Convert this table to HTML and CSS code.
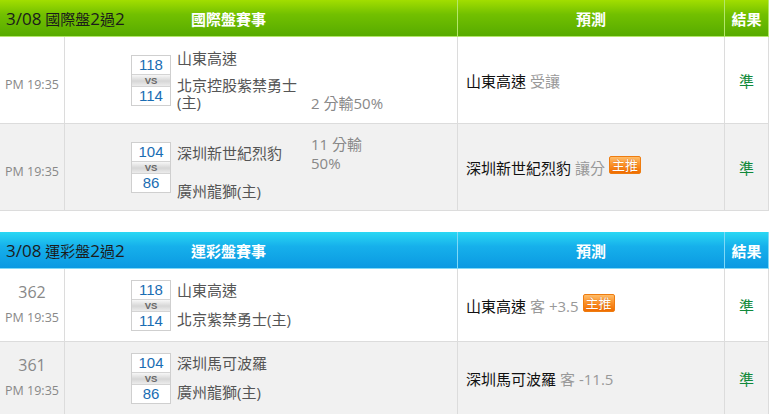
FILE: index.html
```html
<!DOCTYPE html>
<html lang="zh-Hant">
<head>
<meta charset="utf-8">
<title>過關預測</title>
<link rel="stylesheet" href="styles.css">
</head>
<body>
<section class="board green">
  <div class="head">
    <div class="h-title"><span class="h-date"><span class="d-num">3/08</span> 國際盤<span class="d-num">2</span>過<span class="d-num">2</span></span><span class="h-name">國際盤賽事</span><span></span></div>
    <div class="h-cell">預測</div>
    <div class="h-cell">結果</div>
  </div>
  <div class="row row-tall">
    <div class="c-time"><div class="times"><span class="time time-only">PM 19:35</span></div></div>
    <div class="c-match">
      <div class="match">
        <div class="score"><span class="pts">118</span><span class="vs">VS</span><span class="pts">114</span></div>
        <div class="lines lines-info">
          <span class="team t1">山東高速</span>
          <span class="team t2">北京控股紫禁勇士(主)</span>
          <span class="info info-low">2 分輸50%</span>
        </div>
      </div>
    </div>
    <div class="c-pred"><span class="p-team">山東高速</span><span class="p-odds">受讓</span></div>
    <div class="c-res">準</div>
  </div>
  <div class="row row-tall alt">
    <div class="c-time"><div class="times"><span class="time time-only">PM 19:35</span></div></div>
    <div class="c-match">
      <div class="match">
        <div class="score"><span class="pts">104</span><span class="vs">VS</span><span class="pts">86</span></div>
        <div class="lines lines-info">
          <span class="team t1">深圳新世紀烈豹</span>
          <span class="team t2">廣州龍獅(主)</span>
          <span class="info info-high">11 分輸50%</span>
        </div>
      </div>
    </div>
    <div class="c-pred"><span class="p-team">深圳新世紀烈豹</span><span class="p-odds">讓分</span><span class="badge">主推</span></div>
    <div class="c-res">準</div>
  </div>
</section>

<section class="board blue">
  <div class="head">
    <div class="h-title"><span class="h-date"><span class="d-num">3/08</span> 運彩盤<span class="d-num">2</span>過<span class="d-num">2</span></span><span class="h-name">運彩盤賽事</span><span></span></div>
    <div class="h-cell">預測</div>
    <div class="h-cell">結果</div>
  </div>
  <div class="row row-short">
    <div class="c-time"><div class="times"><span class="num">362</span><span class="time">PM 19:35</span></div></div>
    <div class="c-match">
      <div class="match">
        <div class="score"><span class="pts">118</span><span class="vs">VS</span><span class="pts">114</span></div>
        <div class="lines lines-plain">
          <span class="team t1">山東高速</span>
          <span class="team t2">北京紫禁勇士(主)</span>
        </div>
      </div>
    </div>
    <div class="c-pred"><span class="p-team">山東高速</span><span class="p-odds">客 +3.5</span><span class="badge">主推</span></div>
    <div class="c-res">準</div>
  </div>
  <div class="row row-short alt">
    <div class="c-time"><div class="times"><span class="num">361</span><span class="time">PM 19:35</span></div></div>
    <div class="c-match">
      <div class="match">
        <div class="score"><span class="pts">104</span><span class="vs">VS</span><span class="pts">86</span></div>
        <div class="lines lines-plain">
          <span class="team t1">深圳馬可波羅</span>
          <span class="team t2">廣州龍獅(主)</span>
        </div>
      </div>
    </div>
    <div class="c-pred"><span class="p-team">深圳馬可波羅</span><span class="p-odds">客 -11.5</span></div>
    <div class="c-res">準</div>
  </div>
</section>
</body>
</html>
```

FILE: styles.css
```css
* { box-sizing: border-box; margin: 0; padding: 0; }

body {
  margin: 0;
  width: 769px;
  background: #fff;
  color: #333;
  font-family: "Open Sans", "Noto Sans CJK TC", sans-serif;
}

.board + .board { margin-top: 21px; }

/* header */
.head {
  display: grid;
  grid-template-columns: 458px 267px 44px;
  height: 37px;
  border-bottom: 1px solid;
}
.green .head {
  background: linear-gradient(#a2de00 0%, #72c000 40%, #57ab00 100%);
  border-bottom-color: #b4e76a;
}
.blue .head {
  background: linear-gradient(#2ad8f4 0%, #16b0eb 40%, #0b99e2 100%);
  border-bottom-color: #7fd9f7;
}
.h-title {
  display: grid;
  grid-template-columns: 1fr auto 1fr;
  align-items: center;
  border-right: 1px solid;
}
.h-cell {
  display: flex;
  align-items: center;
  justify-content: center;
  border-right: 1px solid;
}
.green .h-title, .green .h-cell { border-right-color: #b4e76a; }
.blue .h-title, .blue .h-cell { border-right-color: #7fd9f7; }

.h-date {
  padding-left: 6px;
  font-size: 15px;
  color: #1b1b1b;
  white-space: nowrap;
}
.d-num { font-size: 17px; }
.h-name, .h-cell {
  font-size: 15px;
  font-weight: bold;
  color: #fff;
}

/* rows */
.row {
  display: grid;
  grid-template-columns: 65px 393px 267px 44px;
  border-bottom: 1px solid #dcdcdc;
  background: #fff;
}
.row.alt { background: #f1f1f1; }
.row-tall { height: 87px; }
.row-short { height: 73px; }
.row > div {
  display: flex;
  align-items: center;
  border-right: 1px solid #dcdcdc;
}

/* time column */
.c-time { justify-content: center; }
.times {
  display: flex;
  flex-direction: column;
  align-items: center;
  color: #888;
}
.time {
  font-size: 12.5px;
  line-height: 26px;
  white-space: nowrap;
}
.time-only { padding-top: 9px; line-height: 18px; }
.num {
  font-size: 16px;
  line-height: 26px;
  color: #888;
}

/* match column */
.match {
  display: flex;
  align-items: center;
  gap: 6px;
  padding-left: 66px;
}
.score {
  width: 40px;
  border: 1px solid #cfcfcf;
  background: #fff;
  display: flex;
  flex-direction: column;
  font-family: "Liberation Sans", sans-serif;
}
.pts {
  height: 18px;
  line-height: 18px;
  text-align: center;
  font-size: 15px;
  color: #1a6db3;
}
.vs {
  height: 13px;
  line-height: 11px;
  text-align: center;
  font-size: 9.5px;
  font-weight: bold;
  color: #666;
  border-top: 1px solid #d4d4d4;
  border-bottom: 1px solid #d4d4d4;
  background: linear-gradient(#f7f7f7, #d6d6d6 55%, #ececec);
}
.lines {
  display: grid;
  grid-template-columns: 128px 78px;
  column-gap: 6px;
}
.lines-info { row-gap: 10px; }
.lines-plain { row-gap: 12px; }
.team {
  font-size: 15px;
  line-height: 17px;
  color: #555;
}
.t1 { grid-column: 1; grid-row: 1; align-self: center; }
.t2 { grid-column: 1; grid-row: 2; }
.info {
  grid-column: 2;
  font-size: 15px;
  line-height: 19px;
  color: #888;
}
.info-low { grid-row: 2; align-self: end; margin-bottom: -2px; }
.info-high { grid-row: 1; align-self: start; }

/* prediction column */
.c-pred {
  padding-left: 8px;
  font-size: 15px;
  white-space: nowrap;
}
.p-team { color: #111; }
.p-odds { color: #999; margin-left: 4px; }
.badge {
  display: inline-block;
  margin-left: 4px;
  height: 18px;
  padding: 0 2px;
  line-height: 16px;
  font-size: 13px;
  color: #fff;
  border: 1px solid #ee7c10;
  border-radius: 2px;
  background: linear-gradient(#ffbd6a, #fb9027 50%, #f06d00);
  text-shadow: 0 0 1px #c05000;
  position: relative;
  top: -2px;
}

/* result column */
.c-res {
  justify-content: center;
  font-size: 15px;
  color: #10893a;
}
```
